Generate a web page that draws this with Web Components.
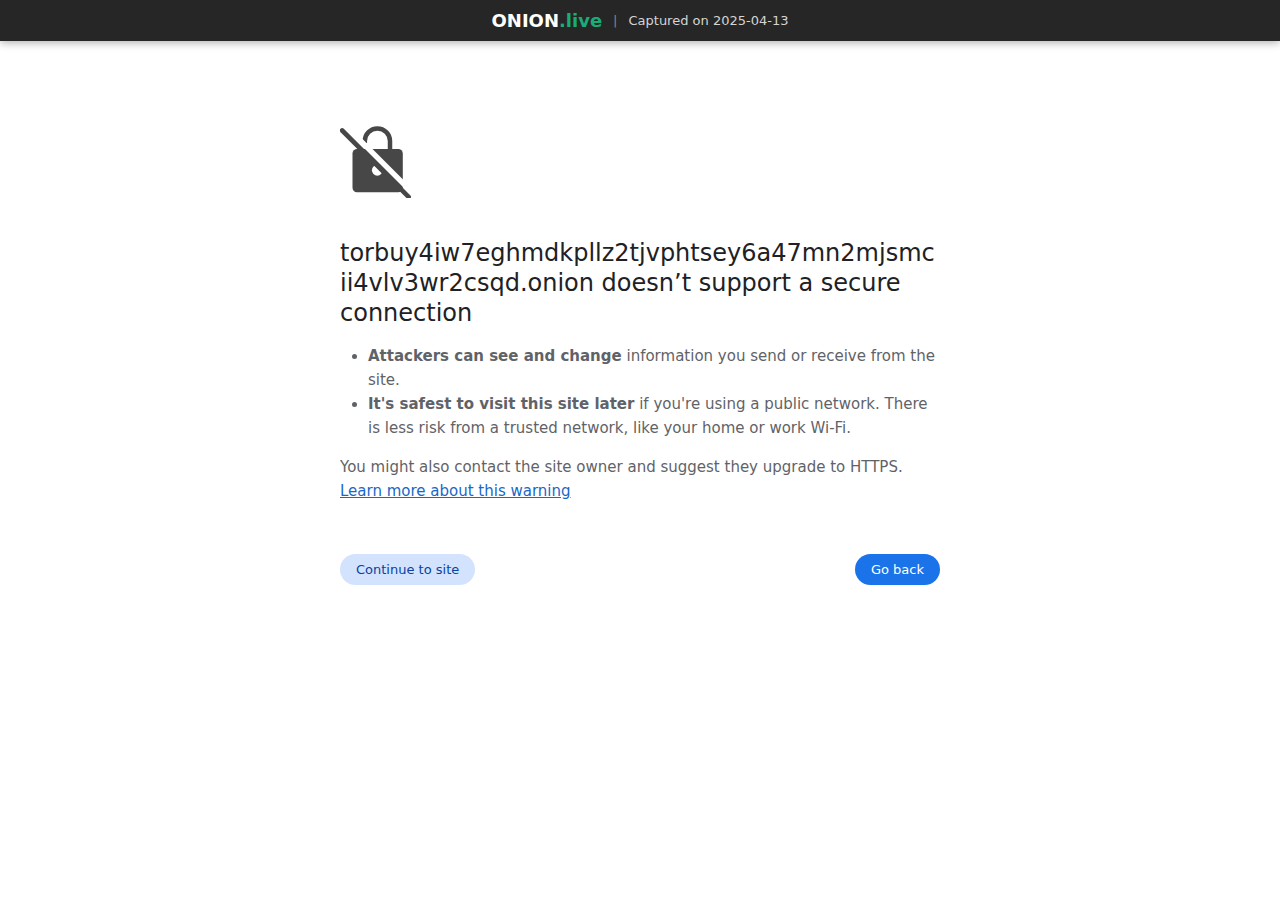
<!DOCTYPE html>
<html lang="en">
<head>
<meta charset="utf-8">
<meta name="viewport" content="width=device-width, initial-scale=1">
<title>Privacy error</title>
<style>
  body { margin: 0; background: #fff; color: #5f6368; font: 15px/24px "DejaVu Sans", sans-serif; }
</style>
</head>
<body>
<capture-bar date="2025-04-13"></capture-bar>
<security-warning>
  <insecure-icon slot="icon"></insecure-icon>
  <span slot="heading">torbuy4iw7eghmdkpllz2tjvphtsey6a47mn2mjsmcii4vlv3wr2csqd.onion doesn’t support a secure connection</span>
  <pill-button slot="actions" variant="tonal">Continue to site</pill-button>
  <pill-button slot="actions">Go back</pill-button>
</security-warning>

<script>
class BaseElement extends HTMLElement {
  constructor() {
    super();
    this.attachShadow({ mode: 'open' }).innerHTML = this.constructor.markup;
  }
}

class CaptureBar extends BaseElement {
  static markup = `
    <style>
      :host { display: block; }
      header { display: flex; align-items: center; justify-content: center; gap: 11px; padding: 9px 16px 8px;
        background: #262626; color: #d4d4d4; font-size: 13px; line-height: 24px; box-shadow: 0 2px 8px rgba(0,0,0,.3); }
      a { color: #fff; font-size: 18px; font-weight: 700; text-decoration: none; }
      .tld { color: #1bab78; }
      .divider { color: #888; }
    </style>
    <header><a href="#">ONION<span class="tld">.live</span></a><span class="divider">|</span><span>Captured on <time></time></span></header>`;
  connectedCallback() {
    const time = this.shadowRoot.querySelector('time');
    time.textContent = time.dateTime = this.getAttribute('date');
  }
}

class InsecureIcon extends BaseElement {
  static markup = `
    <style>
      :host { display: block; width: 72px; height: 72px; }
      svg { display: block; width: 100%; height: 100%; }
    </style>
    <svg viewBox="0 0 72 72" aria-hidden="true">
      <path d="M24.8 17V15a12.6 12.6 0 0 1 25.2 0V24" fill="none" stroke="#474747" stroke-width="4.5"/>
      <rect x="12.5" y="23" width="50.3" height="43.3" rx="4.5" fill="#474747"/>
      <circle cx="37.3" cy="44.3" r="5.4" fill="#fff"/>
      <path d="M15 5.5 72 62.5V70L12 10Z" fill="#fff"/>
      <path d="M2.2 4.5 68.6 70.9" fill="none" stroke="#474747" stroke-width="4.6" stroke-linecap="round"/>
    </svg>`;
}

class PillButton extends BaseElement {
  static markup = `
    <style>
      :host { display: block; }
      button { display: block; padding: 8px 16px; border: 0; border-radius: 20px; background: #1a73e8; color: #fff;
        font: inherit; font-size: 13px; line-height: 15px; cursor: pointer; }
      :host([variant="tonal"]) button { background: #d3e3fd; color: #0842a0; }
    </style>
    <button type="button"><slot></slot></button>`;
}

class SecurityWarning extends BaseElement {
  static markup = `
    <style>
      :host { display: block; padding: 85px 24px 40px; }
      main { max-width: 600px; margin: 0 auto; }
      h1 { margin: 40px 0 16px; color: #202124; font-size: 24px; font-weight: 400; line-height: 30px; overflow-wrap: break-word; }
      ul { margin: 0; padding: 0 0 0 28px; }
      p { margin: 15px 0 0; }
      a { color: #1967c8; }
      .actions { display: flex; flex-wrap: wrap; justify-content: space-between; gap: 12px; margin-top: 51px; }
    </style>
    <main>
      <slot name="icon"></slot>
      <h1><slot name="heading"></slot></h1>
      <ul>
        <li><strong>Attackers can see and change</strong> information you send or receive from the site.</li>
        <li><strong>It's safest to visit this site later</strong> if you're using a public network. There is less risk from a trusted network, like your home or work Wi-Fi.</li>
      </ul>
      <p>You might also contact the site owner and suggest they upgrade to HTTPS. <a href="#">Learn more about this warning</a></p>
      <div class="actions"><slot name="actions"></slot></div>
    </main>`;
}

customElements.define('capture-bar', CaptureBar);
customElements.define('insecure-icon', InsecureIcon);
customElements.define('pill-button', PillButton);
customElements.define('security-warning', SecurityWarning);
</script>
</body>
</html>
